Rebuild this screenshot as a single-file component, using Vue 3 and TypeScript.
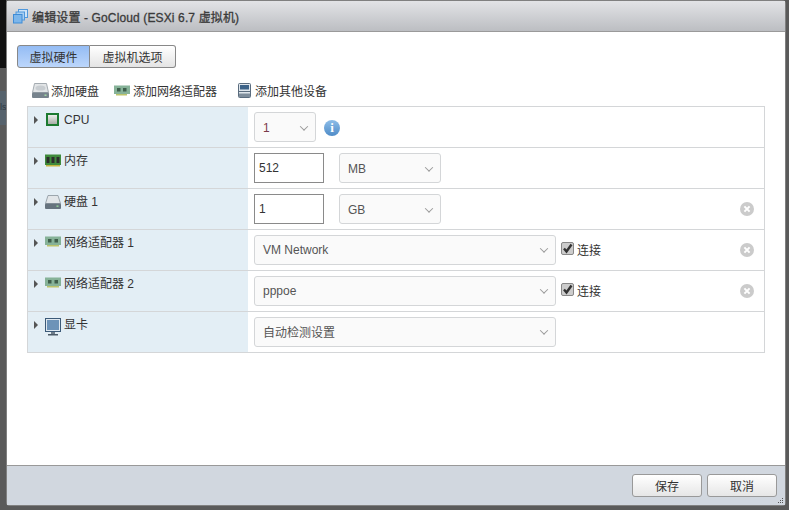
<script setup lang="ts">
interface Row { label: string; icon: string }
const rows: Row[] = [
  { label: 'CPU', icon: 'cpu' },
  { label: '内存', icon: 'ram' },
  { label: '硬盘 1', icon: 'disk' },
  { label: '网络适配器 1', icon: 'nic' },
  { label: '网络适配器 2', icon: 'nic' },
  { label: '显卡', icon: 'vga' }
]
</script>

<template>
  <div class="page">
    <span class="behind">ls</span>
    <div class="dialog">
      <header class="title">
        <svg class="title-icon" width="15" height="15" viewBox="0 0 15 15">
          <rect x="5.5" y="0.5" width="9" height="8" fill="#cfe4f7" stroke="#4f98dc" />
          <rect x="3" y="3" width="8.5" height="8" fill="#a9cff1" stroke="#4f98dc" />
          <rect x="0.5" y="5.5" width="8.5" height="8.5" fill="#7db6ea" stroke="#3f8cd6" />
        </svg>
        <span>编辑设置 - GoCloud (ESXi 6.7 虚拟机)</span>
      </header>
      <main class="body">
        <div class="tabs">
          <button class="tab active">虚拟硬件</button>
          <button class="tab">虚拟机选项</button>
        </div>
        <div class="toolbar">
          <span class="tool">
            <svg width="17" height="15" viewBox="0 0 17 15">
              <path d="M2.5 0.5h12l2 9H0.5z" fill="#e2e5e7" stroke="#a4abb1" />
              <ellipse cx="8.5" cy="5" rx="5" ry="2.6" fill="#c8cdd1" />
              <rect x="0" y="9.5" width="17" height="5.5" rx="1" fill="#77838d" />
              <rect x="12.5" y="11.5" width="2" height="1.4" fill="#a5e0a5" />
            </svg>
            添加硬盘
          </span>
          <span class="tool t2">
            <svg width="16" height="11" viewBox="0 0 16 11">
              <rect y="0.5" width="16" height="8.5" fill="#86b298" />
              <rect x="3" y="3" width="3.5" height="3.5" fill="#3f5f4c" />
              <rect x="9" y="3" width="3.5" height="3.5" fill="#3f5f4c" />
              <rect x="2" y="9" width="11" height="1.5" fill="#bcc36a" />
            </svg>
            添加网络适配器
          </span>
          <span class="tool t3">
            <svg width="13" height="15" viewBox="0 0 13 15">
              <rect x="0.5" y="0.5" width="12" height="14" rx="1" fill="#dfe6ec" stroke="#5a6c7e" />
              <rect x="2" y="2" width="9" height="4.5" fill="#3c6288" />
              <rect x="1" y="8" width="11" height="1" fill="#5a6c7e" />
              <rect x="1" y="10.5" width="11" height="3.5" fill="#7f8e9c" />
            </svg>
            添加其他设备
          </span>
        </div>
        <div class="table">
          <div v-for="(r, i) in rows" :key="r.label + i" class="row">
            <div class="head">
              <span class="caret"></span>
              <span class="row-icon">
                <svg v-if="r.icon === 'cpu'" width="13" height="13" viewBox="0 0 13 13">
                  <defs>
                    <linearGradient id="cpuCore" x1="0" y1="0" x2="0" y2="1">
                      <stop offset="0" stop-color="#eceeea" />
                      <stop offset="1" stop-color="#a9aea8" />
                    </linearGradient>
                  </defs>
                  <rect width="13" height="13" fill="#1c7a30" />
                  <rect x="2" y="2" width="9" height="9" fill="url(#cpuCore)" />
                </svg>
                <svg v-else-if="r.icon === 'ram'" width="16" height="13" viewBox="0 0 16 13">
                  <rect y="0.5" width="16" height="10.5" fill="#3f8a3c" />
                  <rect x="1.5" y="3" width="3" height="6" fill="#2c2f2c" />
                  <rect x="6.5" y="3" width="3" height="6" fill="#2c2f2c" />
                  <rect x="11.5" y="3" width="3" height="6" fill="#2c2f2c" />
                  <rect x="1" y="11" width="14" height="1.5" fill="#c2b53f" />
                </svg>
                <svg v-else-if="r.icon === 'disk'" width="16" height="14" viewBox="0 0 16 14">
                  <path d="M3 0.5h10l2.5 8H0.5z" fill="#e2e6e9" stroke="#8a949c" stroke-width="0.8" />
                  <rect y="8.5" width="16" height="5.5" rx="1" fill="#66737e" />
                  <rect x="11.5" y="10.5" width="2" height="1.3" fill="#9be09b" />
                </svg>
                <svg v-else-if="r.icon === 'nic'" width="16" height="11" viewBox="0 0 16 11">
                  <rect y="0.5" width="16" height="8.5" fill="#86b298" />
                  <rect x="3" y="3" width="3.5" height="3.5" fill="#3f5f4c" />
                  <rect x="9.5" y="3" width="3.5" height="3.5" fill="#3f5f4c" />
                  <rect x="2" y="9" width="12" height="1.5" fill="#bcc36a" />
                </svg>
                <svg v-else width="16" height="18" viewBox="0 0 16 18">
                  <rect x="0.5" y="0.5" width="15" height="13" fill="#dfe8f0" stroke="#3c5a78" />
                  <rect x="2" y="2" width="12" height="10" fill="#6d93b8" />
                  <rect x="6" y="14" width="4" height="2" fill="#6f7d8a" />
                  <rect x="3" y="16" width="10" height="1.5" fill="#4d5b68" />
                </svg>
              </span>
              <span class="label">{{ r.label }}</span>
            </div>
            <div class="cell">
              <template v-if="r.icon === 'cpu'">
                <span class="sel w62"><span class="red">1</span><i class="chev"></i></span>
                <span class="info">i</span>
              </template>
              <template v-else-if="r.icon === 'ram'">
                <span class="input">512</span>
                <span class="sel w102 gap"><span>MB</span><i class="chev"></i></span>
              </template>
              <template v-else-if="r.icon === 'disk'">
                <span class="input">1</span>
                <span class="sel w102 gap"><span>GB</span><i class="chev"></i></span>
                <svg class="del" width="14" height="14" viewBox="0 0 14 14">
                  <circle cx="7" cy="7" r="7" fill="#cbcbcb" />
                  <path d="M4.4 4.4l5.2 5.2M9.6 4.4l-5.2 5.2" stroke="#fff" stroke-width="2" />
                </svg>
              </template>
              <template v-else-if="r.icon === 'nic'">
                <span class="sel w302"><span>{{ i === 3 ? 'VM Network' : 'pppoe' }}</span><i class="chev"></i></span>
                <span class="check">
                  <svg width="11" height="11" viewBox="0 0 11 11"><path d="M2 5.5l2.5 3L9.5 1.5" fill="none" stroke="#333" stroke-width="2.4" /></svg>
                </span>
                <span class="conn">连接</span>
                <svg class="del" width="14" height="14" viewBox="0 0 14 14">
                  <circle cx="7" cy="7" r="7" fill="#cbcbcb" />
                  <path d="M4.4 4.4l5.2 5.2M9.6 4.4l-5.2 5.2" stroke="#fff" stroke-width="2" />
                </svg>
              </template>
              <template v-else>
                <span class="sel w302"><span>自动检测设置</span><i class="chev"></i></span>
              </template>
            </div>
          </div>
        </div>
      </main>
      <footer class="foot">
        <button class="btn">保存</button>
        <button class="btn">取消</button>
        <svg class="grip" width="7" height="7" viewBox="0 0 7 7">
          <path d="M5 1h1v1H5zM3 3h1v1H3zM5 3h1v1H5zM1 5h1v1H1zM3 5h1v1H3zM5 5h1v1H5z" fill="#555" />
        </svg>
      </footer>
    </div>
  </div>
</template>

<style>
html, body { margin: 0; background: #555; }
</style>

<style scoped>
.page {
  position: relative;
  width: 789px;
  height: 510px;
  padding-top: 1px;
  padding-left: 7px;
  box-sizing: border-box;
  background:
    linear-gradient(#111 68px, transparent 68px) 0 0 / 6px 100% no-repeat,
    linear-gradient(transparent 91px, #56626c 91px, #56626c 125px, transparent 125px) 0 0 / 6px 100% no-repeat,
    #5a5a5a;
  font-family: "Liberation Sans", "Noto Sans CJK SC", sans-serif;
  font-size: 12px;
  color: #333;
  overflow: hidden;
}
.behind {
  position: absolute;
  left: 0;
  top: 102px;
  font-size: 9px;
  color: #2e3a44;
}
.dialog {
  position: relative;
  width: 778px;
  height: 504px;
  display: flex;
  flex-direction: column;
  background: #fff;
  border-radius: 3px;
  box-shadow: 0 0 0 1px #808080;
}
.title {
  height: 31px;
  box-sizing: border-box;
  padding-left: 6px;
  display: flex;
  align-items: center;
  gap: 4px;
  background: linear-gradient(#e2e3e6, #bcbec2);
  border-bottom: 1px solid #9a9a9a;
  font-size: 12px;
  letter-spacing: 0.13px;
  color: #3a3a3a;
  -webkit-text-stroke: 0.3px #3a3a3a;
}
.body { flex: 1; padding: 13px 0 0 10px; box-sizing: border-box; }
.tabs { display: flex; }
.tab {
  height: 23px;
  padding: 0;
  border: 1px solid #888;
  border-left: 0;
  border-radius: 0 3px 3px 0;
  background: linear-gradient(#fff, #e4e4e4);
  font: 12px "Liberation Sans", "Noto Sans CJK SC", sans-serif;
  color: #333;
  width: 86px;
}
.tab.active {
  width: 73px;
  background: linear-gradient(#94bcf4, #bcd6fb);
  border-left: 1px solid #888;
  border-radius: 3px 0 0 3px;
}
.toolbar { display: flex; align-items: center; height: 22px; margin-top: 11px; padding-left: 15px; }
.tool { display: inline-flex; align-items: center; gap: 2px; }
.t2 { margin-left: 15px; gap: 3px; }
.t3 { margin-left: 21px; gap: 4px; }
.table { width: 736px; margin: 5px 0 0 10px; border: 1px solid #d4d6d8; border-bottom: 0; }
.row { display: flex; height: 40px; border-bottom: 1px solid #d4d6d8; }
.head {
  width: 220px;
  background: #e3eef5;
  display: flex;
  align-items: flex-start;
  padding: 6px 0 0 6px;
  box-sizing: border-box;
}
.caret {
  width: 0; height: 0;
  margin-top: 3px;
  border-left: 4px solid #555;
  border-top: 4px solid transparent;
  border-bottom: 4px solid transparent;
}
.row-icon { width: 17px; margin-left: 6px; height: 15px; display: flex; align-items: flex-start; justify-content: center; flex: none; }
.label { margin-left: 3px; line-height: 14px; }
.cell { flex: 1; display: flex; align-items: center; padding-left: 6px; position: relative; }
.sel {
  height: 30px;
  box-sizing: border-box;
  border: 1px solid #d4d6d8;
  border-radius: 3px;
  background: #fafafa;
  display: flex;
  align-items: center;
  justify-content: space-between;
  padding: 1px 8px 0 8px;
  color: #555;
}
.w62 { width: 62px; }
.w102 { width: 102px; }
.w302 { width: 302px; padding-top: 0; padding-bottom: 1px; }
.gap { margin-left: 15px; }
.red { color: #7a3a4a; }
.chev {
  width: 5px; height: 5px;
  border-right: 1px solid #999;
  border-bottom: 1px solid #999;
  transform: rotate(45deg) translate(-1px, -1px);
}
.info {
  width: 16px; height: 16px;
  margin-left: 8px;
  margin-top: 1px;
  border-radius: 50%;
  background: linear-gradient(#8dbde8, #4f8cc8);
  color: #fff;
  font: bold 13px/16px "Liberation Serif", serif;
  text-align: center;
}
.input {
  width: 70px; height: 30px;
  box-sizing: border-box;
  border: 1px solid #8a8a8a;
  padding-left: 4px;
  line-height: 29px;
  color: #333;
}
.check {
  width: 11px; height: 11px;
  margin: -4px 0 0 5px;
  background: #ccc;
  border: 1px solid #888;
  border-radius: 2px;
  display: flex;
}
.conn { margin: -2px 0 0 3px; }
.del {
  position: absolute;
  right: 10px;
  top: 50%;
  margin-top: -7px;
}
.foot {
  position: relative;
  height: 40px;
  box-sizing: border-box;
  border-top: 1px solid #999;
  background: #d1d7df;
  display: flex;
  justify-content: flex-end;
  gap: 5px;
  padding: 8px 8px 0 0;
}
.grip { position: absolute; right: 1px; bottom: 1px; }
.btn {
  width: 70px; height: 23px;
  border: 1px solid #999;
  border-radius: 3px;
  background: linear-gradient(#fff, #e6e6e6);
  font: 12px "Liberation Sans", "Noto Sans CJK SC", sans-serif;
  color: #333;
  padding: 0;
}
</style>
